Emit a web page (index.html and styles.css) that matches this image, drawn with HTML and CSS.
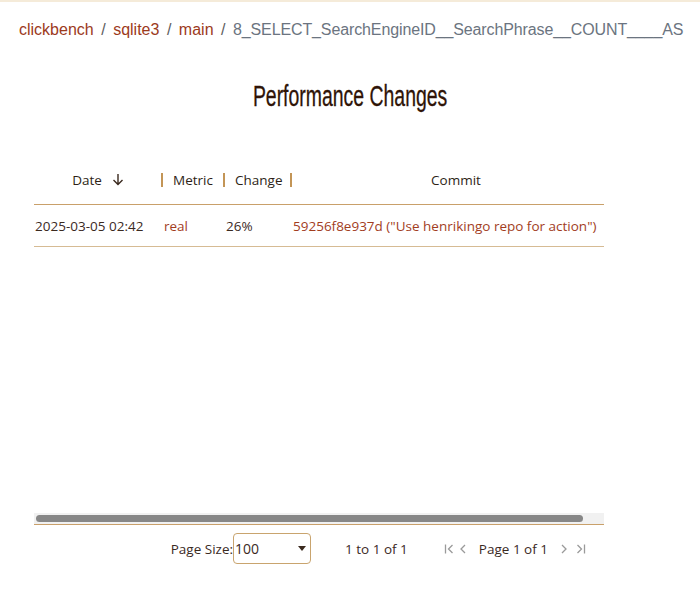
FILE: index.html
```html
<!DOCTYPE html>
<html lang="en">
<head>
<meta charset="utf-8">
<title>Performance Changes</title>
<link rel="stylesheet" href="styles.css">
</head>
<body>
<div class="topbar"></div>
<nav class="crumbs">
  <a class="crumb-link" href="#">clickbench</a><span class="sep">/</span><a class="crumb-link" href="#">sqlite3</a><span class="sep">/</span><a class="crumb-link" href="#">main</a><span class="sep">/</span><span class="crumb-current">8_SELECT_SearchEngineID__SearchPhrase__COUNT____AS</span>
</nav>
<h1 class="title"><span class="title-text">Performance Changes</span></h1>
<div class="grid">
  <div class="viewport">
    <div class="inner">
      <div class="hrow">
        <div class="hcell c-date center">Date<svg class="arrow" width="12" height="13" viewBox="0 0 12 13"><path d="M6 1v10.5M1.5 7l4.5 4.5L10.5 7" fill="none" stroke="#3b2a1f" stroke-width="1.4"/></svg></div>
        <div class="hcell c-metric">Metric</div>
        <div class="hcell c-change">Change</div>
        <div class="hcell c-commit center nosep">Commit</div>
      </div>
      <div class="row">
        <div class="cell c-date">2025-03-05 02:42</div>
        <div class="cell c-metric link">real</div>
        <div class="cell c-change">26%</div>
        <div class="cell c-commit link">59256f8e937d ("Use henrikingo repo for action")</div>
      </div>
    </div>
  </div>
  <div class="hscroll"><div class="thumb"></div></div>
  <div class="pager">
    <label class="ps-label">Page Size:</label>
    <div class="select"><span>100</span><span class="tri"></span></div>
    <span class="summary">1 to 1 of 1</span>
    <div class="nav">
      <svg class="ico first" width="12" height="12" viewBox="0 0 12 12"><path d="M2.5 1.5v9M9.5 2L5.5 6l4 4" fill="none" stroke="#9a9a9a" stroke-width="1.3"/></svg>
      <svg class="ico prev" width="12" height="12" viewBox="0 0 12 12"><path d="M8 2L4 6l4 4" fill="none" stroke="#9a9a9a" stroke-width="1.3"/></svg>
      <span class="pages">Page 1 of 1</span>
      <svg class="ico next" width="12" height="12" viewBox="0 0 12 12"><path d="M4 2l4 4-4 4" fill="none" stroke="#9a9a9a" stroke-width="1.3"/></svg>
      <svg class="ico last" width="12" height="12" viewBox="0 0 12 12"><path d="M2.5 2l4 4-4 4M9.5 1.5v9" fill="none" stroke="#9a9a9a" stroke-width="1.3"/></svg>
    </div>
  </div>
</div>
</body>
</html>
```

FILE: styles.css
```css
html, body {
  margin: 0;
  padding: 0;
  background: #ffffff;
}
body {
  font-family: "Open Sans", "Lato", sans-serif;
  color: #3b2a1f;
}
.topbar {
  height: 2px;
  background: #f5ebd9;
}
.crumbs {
  padding: 18px 0 0 19px;
  font-family: "Liberation Sans", Arial, sans-serif;
  font-size: 16px;
  line-height: 20px;
  white-space: nowrap;
  overflow: hidden;
}
.crumb-link {
  color: #9c3a1c;
  text-decoration: none;
}
.crumb-current {
  color: #6b7480;
  letter-spacing: -0.12px;
}
.sep {
  color: #5d5d5d;
  margin: 0 7.5px;
}
.title {
  margin: 39px 0 0 0;
  text-align: center;
  font-family: "Liberation Sans", Arial, sans-serif;
  font-weight: normal;
  font-size: 29px;
  line-height: 34px;
  color: #2f1407;
}
.title-text {
  display: inline-block;
  transform: scaleX(0.67);
  -webkit-text-stroke: 0.3px #2f1407;
}
.grid {
  margin: 45px 0 0 34px;
  width: 570px;
  font-size: 13.5px;
}
.viewport {
  width: 570px;
  overflow: hidden;
}
.inner {
  width: 587px;
  height: 355px;
}
.hscroll {
  box-sizing: border-box;
  height: 12px;
  background: #f1f1f1;
  padding: 2px 21px 0 2px;
  border-bottom: 1px solid #c9a06a;
}
.thumb {
  height: 7px;
  border-radius: 4px;
  background: #878787;
}
.hrow {
  display: flex;
  box-sizing: border-box;
  height: 47px;
  padding-bottom: 3px;
  border-bottom: 1px solid #c9a06a;
  align-items: center;
}
.row {
  display: flex;
  height: 41px;
  border-bottom: 1px solid #d6bb94;
  align-items: center;
}
.c-date { width: 128px; }
.c-metric { width: 62px; }
.c-change { width: 67px; }
.c-commit { width: 330px; }
.hcell {
  box-sizing: border-box;
  position: relative;
  padding: 0 11px;
  line-height: 20px;
  color: #2e1f16;
}
.hcell::after {
  content: "";
  position: absolute;
  right: -1px;
  top: 3px;
  width: 2px;
  height: 14px;
  background: #c39556;
}
.hcell.nosep::after {
  display: none;
}
.center {
  text-align: center;
}
.arrow {
  display: inline-block;
  vertical-align: -1px;
  margin-left: 10px;
}
.cell {
  box-sizing: border-box;
  padding: 0 2px 0 1px;
  white-space: nowrap;
  color: #3b2a1f;
}
.cell.c-metric, .cell.c-change, .cell.c-commit {
  padding-left: 2px;
}
.link {
  color: #a23d1e;
}
.pager {
  display: flex;
  justify-content: flex-end;
  align-items: center;
  height: 47px;
  padding-right: 17px;
  color: #3b2a1f;
}
.select {
  box-sizing: border-box;
  width: 78px;
  height: 31px;
  border: 1px solid #c9a46e;
  border-radius: 4px;
  display: flex;
  align-items: center;
  justify-content: space-between;
  padding: 0 4px 0 1px;
  font-size: 14px;
}
.tri {
  width: 0;
  height: 0;
  border-left: 4.5px solid transparent;
  border-right: 4.5px solid transparent;
  border-top: 5px solid #3b2a1f;
}
.summary {
  margin-left: 34px;
}
.nav {
  display: flex;
  align-items: center;
  margin-left: 35px;
}
.ico {
  display: block;
}
.prev {
  margin-left: 2px;
}
.pages {
  margin: 0 10px 0 10px;
}
.last {
  margin-left: 5px;
}
```
